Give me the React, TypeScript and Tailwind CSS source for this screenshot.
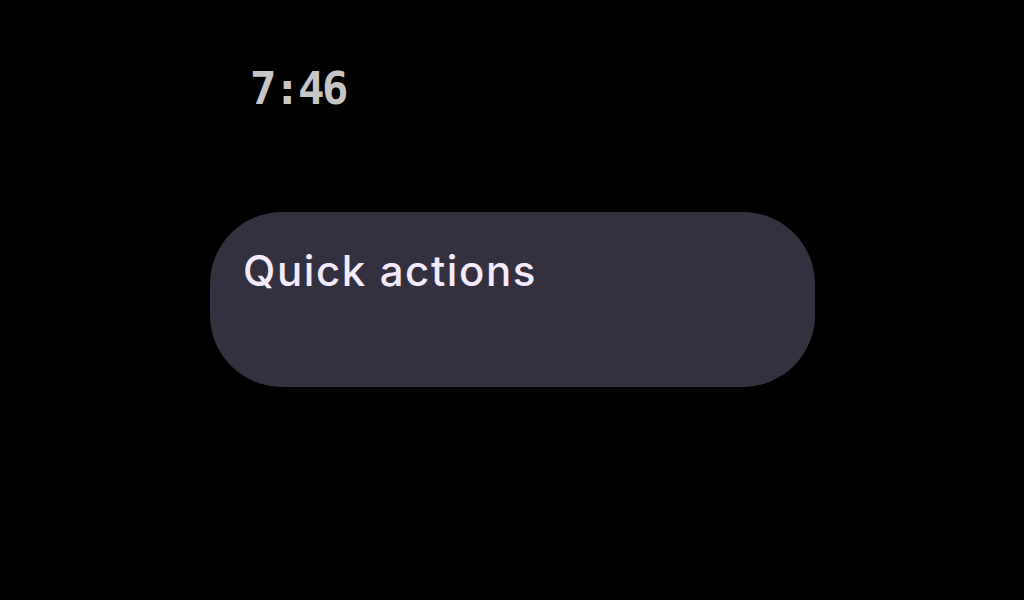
export default function App() {
  return (
    <div className="w-[1024px] h-[600px] bg-black flex flex-col overflow-hidden">
      {/* Clock */}
      <div
        className="pl-[250px] pt-[63px] h-[212px] text-[44px] leading-[52px] font-bold tracking-[-2.5px] text-[#c6c6c6]"
        style={{ fontFamily: '"DejaVu Sans Mono", monospace' }}
      >
        7:46
      </div>

      {/* Quick actions card */}
      <div className="ml-[210px] w-[605px] h-[175px] rounded-[72px] bg-[#33303f] pl-[33px] pt-[34px]">
        <div
          className="text-[42px] leading-[50px] font-medium tracking-[1.6px] text-[#f3eafc]"
          style={{ fontFamily: 'Inter, "Noto Sans", sans-serif' }}
        >
          Quick actions
        </div>
      </div>
    </div>
  );
}
